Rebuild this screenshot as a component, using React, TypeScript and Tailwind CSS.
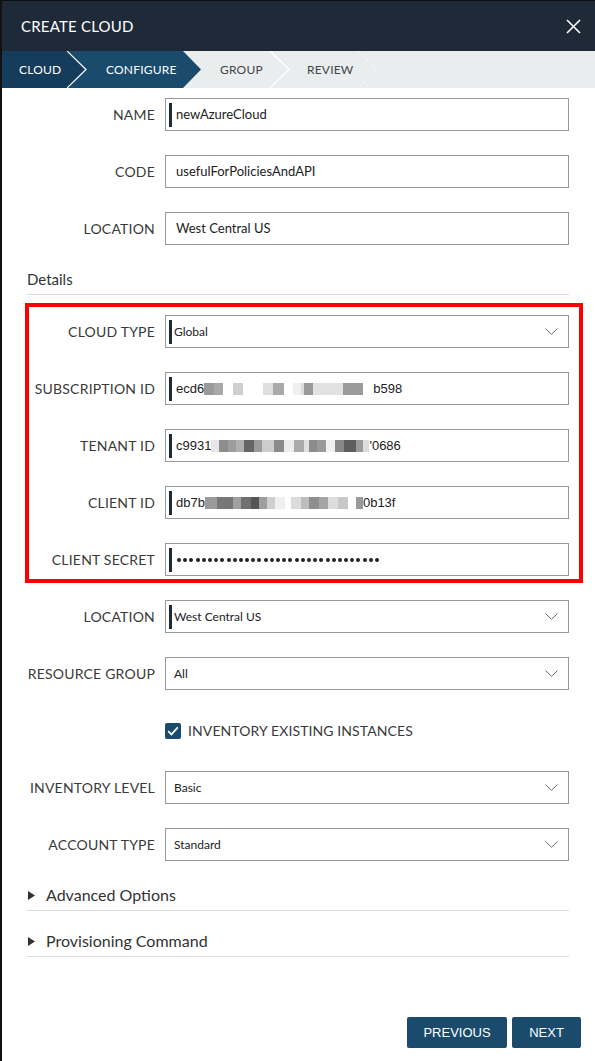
import type { FC, ReactNode } from 'react';

const navy = 'bg-[#1a4a6c]';

const Chevron: FC = () => (
  <svg width="13" height="7" viewBox="0 0 13 7" fill="none" className="shrink-0">
    <path d="M0.5 0.5 L6.5 6.3 L12.5 0.5" stroke="#6b6b6b" strokeWidth="1" />
  </svg>
);

const FocusBar: FC = () => <span className="h-[24px] w-[3px] shrink-0 bg-[#1e2a38]" />;

// pixelated blur cells: [width, colour]
type Cell = [number, string];

const Mosaic: FC<{ cells: Cell[] }> = ({ cells }) => (
  <span className="flex h-[12px] items-stretch">
    {cells.map(([w, c], i) => (
      <span key={i} className="h-full" style={{ width: w, background: c }} />
    ))}
  </span>
);

const Row: FC<{ label: string; children: ReactNode }> = ({ label, children }) => (
  <div className="grid grid-cols-[128px_1fr] items-center gap-x-[10px]">
    <span className="text-right text-[14px] tracking-[0.2px] text-[#3a3a3a]">{label}</span>
    {children}
  </div>
);

const TextInput: FC<{ value: ReactNode; focus?: boolean; mono?: boolean }> = ({ value, focus, mono }) => (
  <div
    className={`flex h-[33px] items-center border border-[#9a9a9a] bg-white text-[#222] ${
      focus ? 'pl-[3px]' : 'pl-[10px]'
    } ${mono ? "font-['Liberation_Sans',Arial,sans-serif] text-[13px]" : 'text-[13px]'}`}
  >
    {focus && <FocusBar />}
    <span className={`flex items-center ${focus ? 'ml-[4px]' : ''}`}>{value}</span>
  </div>
);

const Select: FC<{ value: string; focus?: boolean }> = ({ value, focus }) => (
  <div
    className={`flex h-[33px] items-center border border-[#9a9a9a] bg-white pr-[10px] text-[12px] text-[#222] ${
      focus ? 'pl-[3px]' : 'pl-[8px]'
    }`}
  >
    {focus && <FocusBar />}
    <span className={`flex-1 ${focus ? 'ml-[2px]' : ''}`}>{value}</span>
    <Chevron />
  </div>
);

const Accordion: FC<{ title: string; first?: boolean }> = ({ title, first }) => (
  <div className={`flex flex-col border-b border-[#dddddd] pb-[5px] ${first ? 'pt-[24px]' : 'pt-[20px]'}`}>
    <div className="flex h-[20px] items-center gap-[11px] pl-[1px] text-[16px] text-[#333]">
      <svg width="7" height="9" viewBox="0 0 7 9">
        <polygon points="0,0 7,4.5 0,9" fill="#333" />
      </svg>
      {title}
    </div>
  </div>
);

const subCells: Cell[] = [
  [10, '#9a9a9a'], [9, '#a8a8a8'], [10, 'transparent'], [10, '#cfcfcf'], [20, 'transparent'],
  [10, '#dedede'], [11, '#a9a9a9'], [9, 'transparent'], [8, '#efefef'], [3, '#dddddd'],
  [9, '#9a9a9a'], [30, '#e2e2e2'], [20, '#9b9b9b'], [10, 'transparent'],
];

const tenantCells: Cell[] = [
  [8, '#e6e6e6'], [9, '#8d8d8d'], [8, '#9d9d9d'], [8, '#b0b0b0'], [10, '#666666'], [8, '#9a9a9a'],
  [12, '#cccccc'], [10, '#8a8a8a'], [10, '#ececec'], [10, '#aaaaaa'], [5, '#e0e0e0'], [8, '#8c8c8c'],
  [9, '#9a9a9a'], [9, '#f0f0f0'], [9, '#888888'], [12, '#5e5e5e'], [7, '#9a9a9a'], [6, '#dddddd'],
];

const clientCells: Cell[] = [
  [12, '#9a9a9a'], [16, '#777777'], [8, '#a0a0a0'], [10, '#707070'], [8, '#555555'], [8, '#9d9d9d'],
  [8, '#cfcfcf'], [10, '#efefef'], [6, 'transparent'], [10, '#dcdcdc'], [8, '#bdbdbd'], [10, '#8e8e8e'],
  [9, '#a5a5a5'], [10, '#dddddd'], [10, '#c8c8c8'], [8, 'transparent'], [7, '#9a9a9a'],
];

export default function App() {
  return (
    <div className="flex min-h-screen flex-col border-l-2 border-[#111] bg-white font-['Lato','Open_Sans',sans-serif]">
      {/* header */}
      <div className="flex h-[51px] items-center justify-between border-t border-[#0b0f14] bg-[#1e2a38] pl-[19px] pr-[14px]">
        <span className="text-[15px] tracking-[0.2px] text-white">CREATE CLOUD</span>
        <svg width="15" height="15" viewBox="0 0 15 15">
          <path d="M1 1 L14 14 M14 1 L1 14" stroke="white" strokeWidth="1.6" />
        </svg>
      </div>

      {/* wizard steps */}
      <div className="flex h-[37px] bg-[#e9edee] text-[12px] tracking-[0.2px]">
        <div className="relative flex w-[65px] items-center bg-[#153c5a] pl-[17px] text-white">
          CLOUD
          <svg className="absolute left-full top-0 z-10" width="21" height="37" viewBox="0 0 21 37">
            <polygon points="0,0 19,18.5 0,37" fill="#153c5a" />
            <polyline points="0,0 19,18.5 0,37" fill="none" stroke="white" strokeWidth="1.2" />
          </svg>
        </div>
        <div className={`relative flex w-[116px] items-center ${navy} pl-[39px] text-white`}>
          CONFIGURE
          <svg className="absolute left-full top-0 z-10" width="19" height="37" viewBox="0 0 19 37">
            <polygon points="0,0 18,18.5 0,37" fill="#1a4a6c" />
          </svg>
        </div>
        <div className="relative flex w-[87px] items-center pl-[37px] text-[#444]">
          GROUP
          <svg className="absolute left-full top-0 z-10" width="21" height="37" viewBox="0 0 21 37">
            <polyline points="0,0 19,18.5 0,37" fill="none" stroke="white" strokeWidth="1.4" />
          </svg>
        </div>
        <div className="relative flex w-[88px] items-center pl-[37px] text-[#444]">
          REVIEW
          <svg className="absolute left-full top-0 z-10" width="21" height="37" viewBox="0 0 21 37">
            <polyline points="0,0 19,18.5 0,37" fill="none" stroke="white" strokeWidth="1" strokeDasharray="2 2" />
          </svg>
        </div>
      </div>

      {/* form */}
      <div className="flex flex-col pl-[25px] pr-[26px] pt-[10px]">
        <div className="flex flex-col gap-[24px]">
          <Row label="NAME">
            <TextInput value="newAzureCloud" focus />
          </Row>
          <Row label="CODE">
            <TextInput value="usefulForPoliciesAndAPI" />
          </Row>
          <Row label="LOCATION">
            <TextInput value="West Central US" />
          </Row>
        </div>

        <div className="mt-[24px] border-b border-[#dddddd] pb-[5px]">
          <div className="flex h-[20px] items-center text-[15px] text-[#333]">Details</div>
        </div>

        <div className="relative mt-[20px] flex flex-col gap-[24px]">
          <div className="pointer-events-none absolute -bottom-[7px] -left-[2px] -right-[14px] -top-[12px] border-4 border-[#ff0000]" />
          <Row label="CLOUD TYPE">
            <Select value="Global" focus />
          </Row>
          <Row label="SUBSCRIPTION ID">
            <TextInput
              focus
              mono
              value={
                <>
                  ecd6
                  <Mosaic cells={subCells} />
                  b598
                </>
              }
            />
          </Row>
          <Row label="TENANT ID">
            <TextInput
              focus
              mono
              value={
                <>
                  c9931
                  <Mosaic cells={tenantCells} />
                  '0686
                </>
              }
            />
          </Row>
          <Row label="CLIENT ID">
            <TextInput
              focus
              mono
              value={
                <>
                  db7b
                  <Mosaic cells={clientCells} />
                  0b13f
                </>
              }
            />
          </Row>
          <Row label="CLIENT SECRET">
            <TextInput
              focus
              value={
                <span className="flex gap-[2.2px] pl-[1px]">
                  {Array.from({ length: 33 }).map((_, i) => (
                    <span key={i} className="h-[4px] w-[4px] rounded-full bg-[#222]" />
                  ))}
                </span>
              }
            />
          </Row>
        </div>

        <div className="mt-[24px] flex flex-col gap-[24px]">
          <Row label="LOCATION">
            <Select value="West Central US" focus />
          </Row>
          <Row label="RESOURCE GROUP">
            <Select value="All" />
          </Row>
          <Row label="">
            <div className="flex h-[33px] items-center gap-[7px]">
              <span className="flex h-[16px] w-[16px] items-center justify-center rounded-[2px] bg-[#1a4a6c]">
                <svg width="12" height="10" viewBox="0 0 12 10">
                  <path d="M1.2 5.2 L4.4 8.4 L10.8 1.4" fill="none" stroke="white" strokeWidth="1.7" />
                </svg>
              </span>
              <span className="text-[14px] tracking-[0.1px] text-[#3a3a3a]">INVENTORY EXISTING INSTANCES</span>
            </div>
          </Row>
          <Row label="INVENTORY LEVEL">
            <Select value="Basic" />
          </Row>
          <Row label="ACCOUNT TYPE">
            <Select value="Standard" />
          </Row>
        </div>

        <Accordion title="Advanced Options" first />
        <Accordion title="Provisioning Command" />
      </div>

      {/* footer */}
      <div className="mt-auto flex justify-end gap-[5px] pb-[13px] pr-[14px] font-['Liberation_Sans',Arial,sans-serif] text-[13px] text-white">
        <button className={`h-[31px] w-[100px] rounded-[2px] ${navy}`}>PREVIOUS</button>
        <button className={`h-[31px] w-[69px] rounded-[2px] ${navy}`}>NEXT</button>
      </div>
    </div>
  );
}
